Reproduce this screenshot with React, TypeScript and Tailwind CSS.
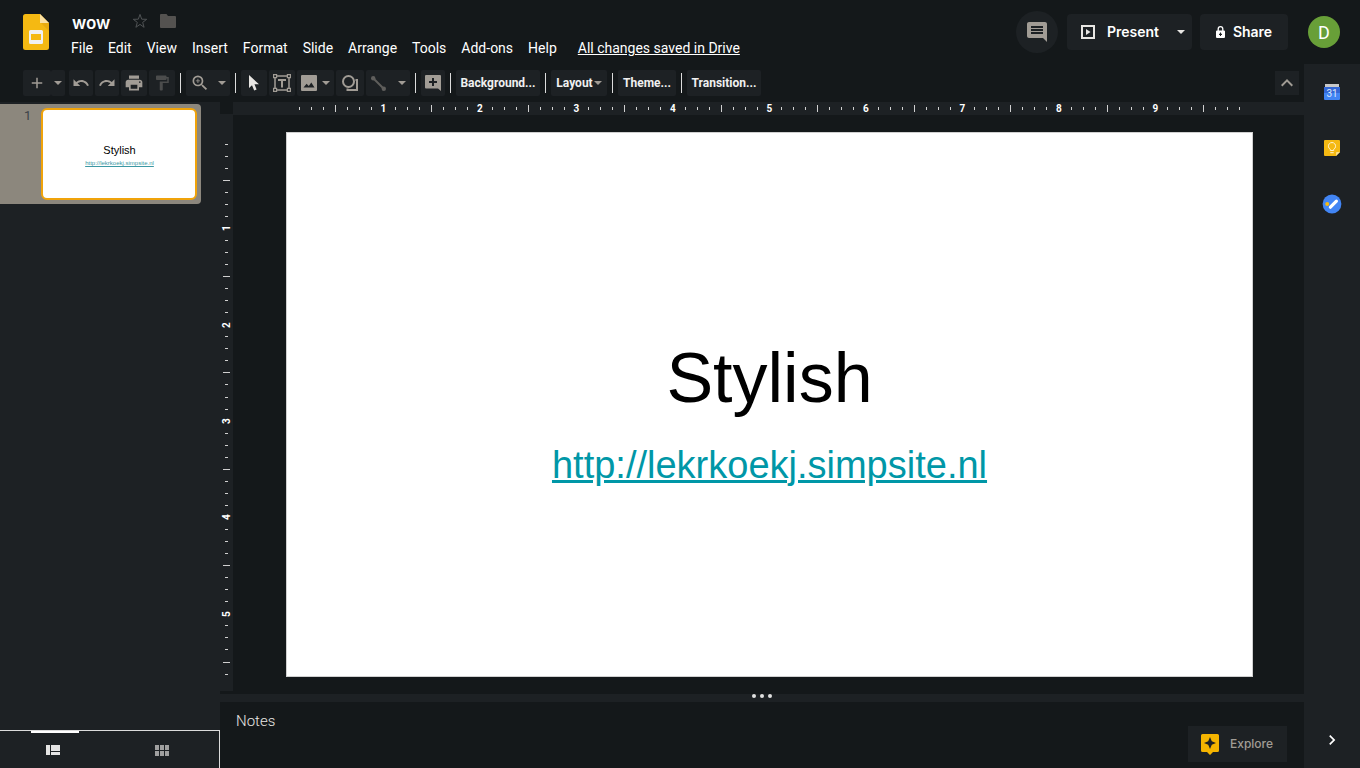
import { useState } from "react";
import type { ReactNode } from "react";
import {
  MdAdd,
  MdChevronRight,
  MdFormatPaint,
  MdInsertComment,
  MdKeyboardArrowUp,
  MdPrint,
  MdRedo,
  MdUndo,
  MdZoomIn,
} from "react-icons/md";

const MENUS = ["File", "Edit", "View", "Insert", "Format", "Slide", "Arrange", "Tools", "Add-ons", "Help"];
const LINK = "http://lekrkoekj.simpsite.nl";

function SlidesLogo() {
  return (
    <svg width="26" height="36" viewBox="0 0 26 36" aria-hidden="true">
      <path d="M2.500 0H17l9 9v24.500a2.500 2.500 0 0 1-2.500 2.500h-21A2.500 2.500 0 0 1 0 33.500v-31A2.500 2.500 0 0 1 2.500 0z" fill="#f5b912" />
      <path d="M17 0l9 9h-9z" fill="#fbe0a0" />
      <path d="M18 9h8v8z" fill="#dfa20e" opacity=".6" />
      <path d="M7.500 16h11A1.500 1.500 0 0 1 20 17.500v11a1.500 1.500 0 0 1-1.500 1.500h-11A1.500 1.500 0 0 1 6 28.500v-11A1.500 1.500 0 0 1 7.500 16zM8 20v6h10v-6z" fill="#f1f1f1" fillRule="evenodd" />
    </svg>
  );
}

function Caret({ light = false }: { light?: boolean }) {
  return (
    <svg width="8" height="4" viewBox="0 0 8 4" aria-hidden="true" className={light ? "text-[#e8e6e3]" : "text-[#a19c95]"}>
      <path d="M0 0h8L4 4z" fill="currentColor" />
    </svg>
  );
}

function Separator() {
  return <div className="mx-[5px] h-5 w-px bg-[#dcdcdc]" />;
}

function ToolButton({ label, className, children }: { label: string; className: string; children: ReactNode }) {
  return (
    <button
      type="button"
      aria-label={label}
      className={`flex h-[26px] shrink-0 items-center justify-center rounded-xs bg-[#1d2124] text-[#a19c95] ${className}`}
    >
      {children}
    </button>
  );
}

function TextButton({ className, children }: { className: string; children: ReactNode }) {
  return (
    <button
      type="button"
      className={`flex h-[26px] shrink-0 items-center justify-center gap-px rounded-xs bg-[#1d2124] text-xs font-bold text-[#f0f0f0] ${className}`}
    >
      {children}
    </button>
  );
}

function Toolbar() {
  return (
    <div className="flex h-[38px] shrink-0 items-center pr-[5px] pl-[23px]" role="toolbar" aria-label="Editing tools">
      <ToolButton label="New slide" className="w-7">
        <MdAdd size={18} />
      </ToolButton>
      <ToolButton label="New slide with layout" className="mr-1 w-3.5">
        <Caret />
      </ToolButton>
      <ToolButton label="Undo" className="mr-0.5 w-6">
        <MdUndo size={18} />
      </ToolButton>
      <ToolButton label="Redo" className="mr-0.5 w-6">
        <MdRedo size={18} />
      </ToolButton>
      <ToolButton label="Print" className="mr-0.5 w-[26px]">
        <MdPrint size={20} />
      </ToolButton>
      <ToolButton label="Paint format" className="w-[26px]">
        <MdFormatPaint size={18} className="text-[#4b4c4c]" />
      </ToolButton>
      <Separator />
      <ToolButton label="Zoom" className="w-11 gap-2">
        <MdZoomIn size={20} />
        <Caret />
      </ToolButton>
      <Separator />
      <ToolButton label="Select" className="mr-0.5 w-[26px]">
        <svg width="10" height="16" viewBox="0 0 10 16" aria-hidden="true">
          <path d="M0 0v13l3-2.800L5.200 15.500l2.400-1L5.500 9.300H10z" fill="#e8e6e3" />
        </svg>
      </ToolButton>
      <ToolButton label="Text box" className="mr-0.5 w-[26px]">
        <svg width="18" height="18" viewBox="0 0 18 18" aria-hidden="true" fill="none" stroke="currentColor">
          <path d="M4 2h10M4 16h10M2 4v10M16 4v10" strokeWidth="1.500" />
          <path d="M.6.600h3v3h-3zM14.400.600h3v3h-3zM.6 14.400h3v3h-3zM14.400 14.400h3v3h-3z" strokeWidth="1.200" />
          <path d="M5 6h8M9 6v7.500" strokeWidth="2" />
        </svg>
      </ToolButton>
      <ToolButton label="Image" className="mr-0.5 w-[37px] gap-[5px]">
        <svg width="16" height="16" viewBox="0 0 16 16" aria-hidden="true">
          <path d="M1 0h14a1 1 0 0 1 1 1v14a1 1 0 0 1-1 1H1a1 1 0 0 1-1-1V1a1 1 0 0 1 1-1zM2.500 12.500h11L10.300 7.500 7.800 11 5.600 8.800z" fill="currentColor" fillRule="evenodd" />
        </svg>
        <Caret />
      </ToolButton>
      <ToolButton label="Shape" className="mr-0.5 w-7">
        <svg width="16" height="16" viewBox="0 0 16 16" aria-hidden="true" fill="none" stroke="currentColor" strokeWidth="2">
          <circle cx="6.500" cy="6.500" r="5.500" />
          <path d="M13.500 5H15v10H5.500v-1.500" />
        </svg>
      </ToolButton>
      <ToolButton label="Line" className="w-11 gap-3">
        <svg width="15" height="15" viewBox="0 0 15 15" aria-hidden="true" className="text-[#5f5e5c]">
          <path d="M2 2l11 11" stroke="currentColor" strokeWidth="2" />
          <circle cx="2.200" cy="2.200" r="2.200" fill="currentColor" />
          <circle cx="12.800" cy="12.800" r="2.200" fill="currentColor" />
        </svg>
        <Caret />
      </ToolButton>
      <Separator />
      <ToolButton label="Add comment" className="w-6">
        <svg width="16" height="16" viewBox="0 0 16 16" aria-hidden="true">
          <path d="M1 0h14a1 1 0 0 1 1 1v15l-3-2.500H1a1 1 0 0 1-1-1V1a1 1 0 0 1 1-1zM7 3v3H4v2h3v3h2V8h3V6H9V3z" fill="currentColor" fillRule="evenodd" />
        </svg>
      </ToolButton>
      <Separator />
      <TextButton className="w-[84px]">Background...</TextButton>
      <Separator />
      <TextButton className="w-14">
        Layout
        <Caret />
      </TextButton>
      <Separator />
      <TextButton className="w-[58px]">Theme...</TextButton>
      <Separator />
      <TextButton className="w-[74px]">Transition...</TextButton>
      <button type="button" aria-label="Hide the menus" className="ml-auto flex size-6 items-center justify-center bg-[#1d2124] text-[#a19c95]">
        <MdKeyboardArrowUp size={24} />
      </button>
    </div>
  );
}

function Header() {
  return (
    <header className="flex h-16 shrink-0 items-start pr-5 pl-[23px]">
      <a href="#home" aria-label="Slides home" className="mt-3.5 shrink-0">
        <SlidesLogo />
      </a>
      <div className="ml-[15px] pt-[11px]">
        <div className="flex h-6 items-center pl-2">
          <input
            aria-label="Document name"
            defaultValue="wow"
            className="w-[60px] bg-transparent font-[Inter,sans-serif] text-[17px] leading-6 font-semibold text-white outline-none"
          />
          <button type="button" aria-label="Star" className="pb-1">
            <svg width="16" height="16" viewBox="0 0 16 16" aria-hidden="true">
              <path d="M8 1.400l1.700 4.800 5 .1-4 3.100 1.400 4.900L8 11.400l-4.100 2.900 1.400-4.900-4-3.100 5-.1z" fill="none" stroke="#505355" strokeWidth="1" />
            </svg>
          </button>
          <button type="button" aria-label="Move to folder" className="ml-3 pb-1">
            <svg width="16" height="14" viewBox="0 0 16 14" aria-hidden="true">
              <path d="M1 0h5.500L8 2h7a1 1 0 0 1 1 1v10a1 1 0 0 1-1 1H1a1 1 0 0 1-1-1V1a1 1 0 0 1 1-1z" fill="#545250" />
            </svg>
          </button>
        </div>
        <div className="mt-[3px] flex h-5 items-center">
          <nav className="flex gap-px">
            {MENUS.map((m) => (
              <button key={m} type="button" className="px-[7px] text-sm text-white">
                {m}
              </button>
            ))}
          </nav>
          <a href="#history" className="ml-3.5 text-sm text-white underline">
            All changes saved in Drive
          </a>
        </div>
      </div>
      <div className="ml-auto flex h-16 shrink-0 items-center font-[Inter,sans-serif] text-sm font-semibold text-white">
        <button type="button" aria-label="Open comment history" className="flex size-[42px] items-center justify-center rounded-full bg-[#1d2124] text-[#a19c95]">
          <MdInsertComment size={24} />
        </button>
        <div className="ml-[9px] flex h-9 w-[125px] rounded-sm bg-[#1d2124]">
          <button type="button" className="flex items-center gap-3 pl-3.5">
            <svg width="14" height="14" viewBox="0 0 14 14" aria-hidden="true">
              <path d="M1 1h12v12H1z" fill="none" stroke="#e8e6e3" strokeWidth="2" />
              <path d="M5 4v6l4.500-3z" fill="#e8e6e3" />
            </svg>
            Present
          </button>
          <button type="button" aria-label="Presentation options" className="ml-auto flex w-[23px] items-center justify-center">
            <Caret light />
          </button>
        </div>
        <button type="button" className="ml-2 flex h-9 w-[88px] items-center justify-center gap-2 rounded-sm bg-[#1d2124]">
          <svg width="9" height="12" viewBox="0 0 9 12" aria-hidden="true">
            <path d="M2.200 5V3a2.300 2.300 0 0 1 4.600 0v2" fill="none" stroke="#fff" strokeWidth="1.300" />
            <path d="M1 4.500h7a1 1 0 0 1 1 1V11a1 1 0 0 1-1 1H1a1 1 0 0 1-1-1V5.500a1 1 0 0 1 1-1zM4 6.500v1.200H3v1.200h1V10h1V8.900h1V7.700H5V6.500z" fill="#fff" fillRule="evenodd" />
          </svg>
          Share
        </button>
        <button type="button" aria-label="Account" className="ml-5 size-8 rounded-full bg-[#689f38] pt-0.5 font-[Roboto,sans-serif] text-lg font-normal">
          D
        </button>
      </div>
    </header>
  );
}

function Filmstrip() {
  const [view, setView] = useState("film");
  return (
    <aside className="flex w-[220px] shrink-0 flex-col bg-[#1d2124]">
      <div className="flex-1 pt-0.5">
        <div className="flex h-[100px] w-[201px] rounded-r-sm bg-[#8c877d] pt-1">
          <span className="w-[41px] pl-6 text-[13px] leading-4 text-[#3c4248]">1</span>
          <div className="flex h-[92px] w-[156px] flex-col items-center justify-center rounded-md border-2 border-[#f0a30a] bg-white pt-1 pl-px font-['Liberation_Sans',sans-serif]">
            <p className="text-[11px] leading-[14px] text-black">Stylish</p>
            <a href={LINK} className="text-[6px] leading-3 text-[#3c98a3] underline">
              {LINK}
            </a>
          </div>
        </div>
      </div>
      <div className="flex h-[38px] border-t border-r border-[#dcdcdc]">
        <button type="button" aria-label="Filmstrip view" onClick={() => setView("film")} className="flex flex-1 flex-col items-center">
          <span className={`h-0.5 w-12 ${view === "film" ? "bg-white" : "bg-transparent"}`} />
          <svg width="14" height="10" viewBox="0 0 14 10" aria-hidden="true" className="mt-3 mr-1" fill="#e4e4e4">
            <path d="M0 0h4v10H0zM5 0h9v6H5zM5 7h9v3H5z" />
          </svg>
        </button>
        <button type="button" aria-label="Grid view" onClick={() => setView("grid")} className="flex flex-1 flex-col items-center">
          <span className={`h-0.5 w-12 ${view === "grid" ? "bg-white" : "bg-transparent"}`} />
          <svg width="14" height="11" viewBox="0 0 14 11" aria-hidden="true" className="mt-3 mr-1" fill="#a0a0a0">
            <path d="M0 0h4v5H0zM5 0h4v5H5zM10 0h4v5h-4zM0 6h4v5H0zM5 6h4v5H5zM10 6h4v5h-4z" />
          </svg>
        </button>
      </div>
    </aside>
  );
}

function HorizontalRuler() {
  return (
    <div className="flex h-[13px] bg-[#1d2124] pr-[58px] pl-[60px] text-[10px] leading-none font-bold text-white">
      {Array.from({ length: 79 }, (_, i) => i + 1).map((k) => (
        <div key={k} className="flex min-w-0 flex-1 items-center justify-center">
          {k % 8 === 0 ? k / 8 : <span className={k % 4 === 0 ? "h-[7px] w-px bg-[#d0d0d0]" : "h-[3px] w-px bg-[#d0d0d0]"} />}
        </div>
      ))}
    </div>
  );
}

function VerticalRuler() {
  return (
    <div className="mb-[3px] flex flex-1 flex-col bg-[#1d2124] pt-6 pb-[11px] text-[10px] leading-none font-bold text-white">
      {Array.from({ length: 45 }, (_, i) => i + 1).map((k) => (
        <div key={k} className="flex min-h-0 flex-1 items-center justify-center">
          {k % 8 === 0 ? (
            <span className="-rotate-90">{k / 8}</span>
          ) : (
            <span className={k % 4 === 0 ? "h-px w-[7px] bg-[#d0d0d0]" : "h-px w-[3px] bg-[#d0d0d0]"} />
          )}
        </div>
      ))}
    </div>
  );
}

function Editor() {
  return (
    <main className="flex min-w-0 flex-1 flex-col">
      <div className="flex min-h-0 flex-1">
        <div className="flex w-[13px] shrink-0 flex-col">
          <div className="h-3" />
          <VerticalRuler />
        </div>
        <div className="flex min-w-0 flex-1 flex-col">
          <HorizontalRuler />
          <div className="flex flex-1 py-[17px] pr-[51px] pl-[53px]">
            <section className="flex flex-1 flex-col items-center justify-center border border-[#d0d0d0] bg-white pt-[15px] font-['Liberation_Sans',sans-serif]">
              <h1 className="text-[70px] leading-[80px] text-black">Stylish</h1>
              <a href={LINK} className="mt-[25px] text-[38px] leading-[44px] text-[#0097a7] underline">
                {LINK}
              </a>
            </section>
          </div>
        </div>
      </div>
      <div className="flex h-2 items-start justify-center gap-1 bg-[#1d2124]" role="separator">
        <span className="size-1 rounded-full bg-[#e0e0e0]" />
        <span className="size-1 rounded-full bg-[#e0e0e0]" />
        <span className="size-1 rounded-full bg-[#e0e0e0]" />
      </div>
      <div className="flex h-[66px] items-start pr-[17px] pl-4">
        <textarea
          aria-label="Speaker notes"
          defaultValue="Notes"
          className="mt-2 h-12 flex-1 resize-none bg-transparent text-[15px] leading-[22px] font-light text-[#e8e6e3] outline-none"
        />
        <button type="button" className="mt-6 flex h-9 w-[99px] items-center gap-[11px] bg-[#1d2124] pl-[13px] font-[Inter,sans-serif] text-xs font-medium text-[#a19c95]">
          <svg width="18" height="21" viewBox="0 0 18 21" aria-hidden="true">
            <path d="M1.500 0h15A1.500 1.500 0 0 1 18 1.500v15a1.500 1.500 0 0 1-1.500 1.500H12l-3 3-3-3H1.500A1.500 1.500 0 0 1 0 16.500v-15A1.500 1.500 0 0 1 1.500 0z" fill="#f5b400" />
            <path d="M9 3l1.800 4.200L15 9l-4.200 1.800L9 15l-1.800-4.200L3 9l4.200-1.800z" fill="#1d2124" />
          </svg>
          Explore
        </button>
      </div>
    </main>
  );
}

function SidePanel() {
  return (
    <aside className="flex w-14 shrink-0 flex-col items-center bg-[#1d2124] pt-[18px] pb-[18px]">
      <button type="button" aria-label="Calendar" className="flex size-5 items-center justify-center">
        <svg width="16" height="16" viewBox="0 0 16 16" aria-hidden="true">
          <path d="M1 0h14v3H1z" fill="#c8c8c8" />
          <path d="M0 3h16v12a1 1 0 0 1-1 1H1a1 1 0 0 1-1-1z" fill="#4285f4" />
          <path d="M0 3h16v6H0z" fill="#3367d6" />
          <text x="8" y="13" textAnchor="middle" fontFamily="Roboto, sans-serif" fontSize="10" fill="#dfe8fb">31</text>
        </svg>
      </button>
      <button type="button" aria-label="Keep" className="mt-9 flex size-5 items-center justify-center">
        <svg width="16" height="16" viewBox="0 0 16 16" aria-hidden="true">
          <path d="M1 0h14a1 1 0 0 1 1 1v11l-4 4H1a1 1 0 0 1-1-1V1a1 1 0 0 1 1-1z" fill="#f5b912" />
          <path d="M16 12l-4 4v-3a1 1 0 0 1 1-1z" fill="#fbe08a" />
          <path d="M6.300 10.500V9.300a3.600 3.600 0 1 1 3.400 0v1.200zM6.300 12.700h3.400" fill="none" stroke="#fff3d0" strokeWidth="1" />
        </svg>
      </button>
      <button type="button" aria-label="Tasks" className="mt-9 flex size-5 items-center justify-center">
        <svg width="20" height="20" viewBox="0 0 20 20" aria-hidden="true">
          <circle cx="10" cy="10" r="9.400" fill="#4285f4" />
          <path d="M8.400 13.200l6-6" stroke="#fff" strokeWidth="3.200" strokeLinecap="round" />
          <circle cx="5.200" cy="10" r="2" fill="#f5b912" />
        </svg>
      </button>
      <button type="button" aria-label="Hide side panel" className="mt-auto text-white">
        <MdChevronRight size={20} />
      </button>
    </aside>
  );
}

export default function App() {
  return (
    <div className="flex min-h-screen flex-col bg-[#14181a] font-[Roboto,sans-serif]">
      <Header />
      <div className="flex flex-1">
        <div className="flex min-w-0 flex-1 flex-col">
          <Toolbar />
          <div className="flex flex-1">
            <Filmstrip />
            <Editor />
          </div>
        </div>
        <SidePanel />
      </div>
    </div>
  );
}
